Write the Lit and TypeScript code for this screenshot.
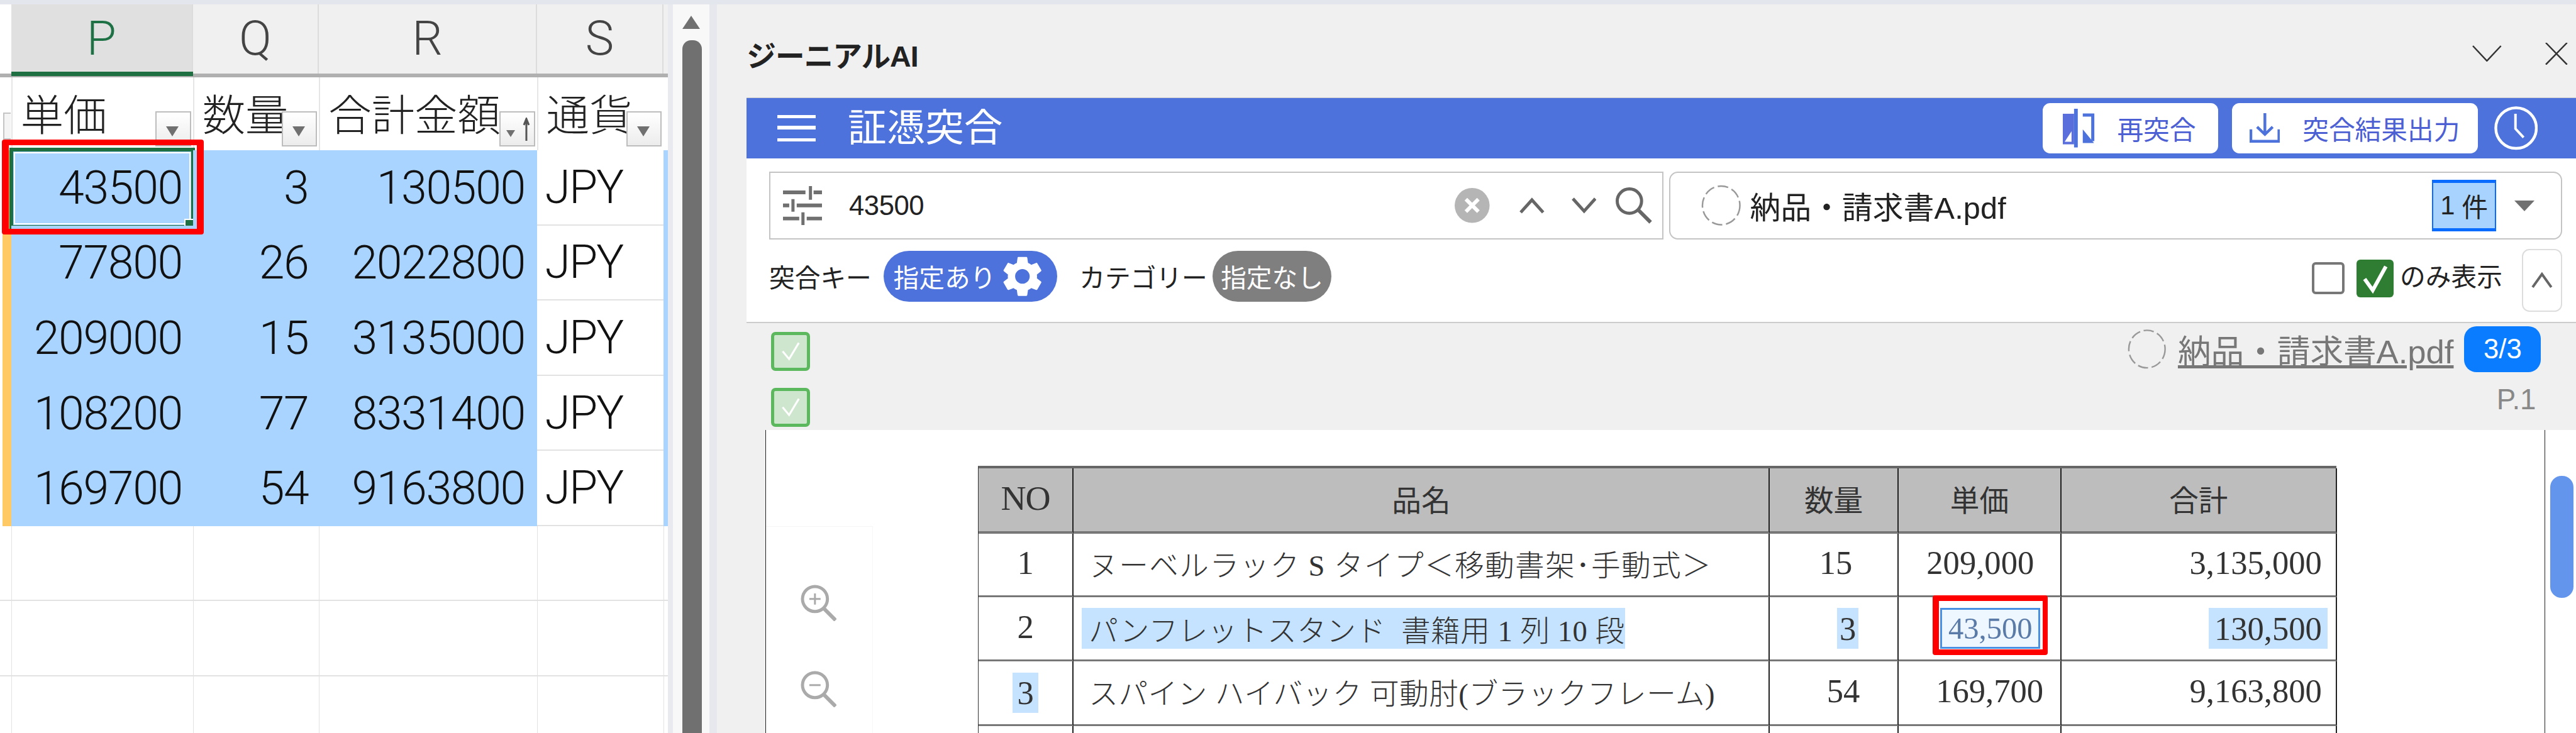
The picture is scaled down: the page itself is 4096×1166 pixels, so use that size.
import { LitElement, html, css, svg } from "lit";
import { customElement } from "lit/decorators.js";

const ROWS = [
  ["43500", "3", "130500"],
  ["77800", "26", "2022800"],
  ["209000", "15", "3135000"],
  ["108200", "77", "8331400"],
  ["169700", "54", "9163800"],
];
const HEADS = ["P", "Q", "R", "S"];
const LABELS = ["単価", "数量", "合計金額", "通貨"];

const GEAR = "M19.14 12.94c.04-.3.06-.61.06-.94 0-.32-.02-.64-.07-.94l2.03-1.58c.18-.14.23-.41.12-.61l-1.92-3.32c-.12-.22-.37-.29-.59-.22l-2.39.96c-.5-.38-1.03-.7-1.62-.94l-.36-2.54c-.04-.24-.24-.41-.48-.41h-3.84c-.24 0-.43.17-.47.41l-.36 2.54c-.59.24-1.13.57-1.62.94l-2.39-.96c-.22-.08-.47 0-.59.22L2.74 8.87c-.12.21-.08.47.12.61l2.03 1.58c-.05.3-.09.63-.09.94s.02.64.07.94l-2.03 1.58c-.18.14-.23.41-.12.61l1.92 3.32c.12.22.37.29.59.22l2.39-.96c.5.38 1.03.7 1.62.94l.36 2.54c.05.24.24.41.48.41h3.84c.24 0 .44-.17.47-.41l.36-2.54c.59-.24 1.13-.56 1.62-.94l2.39.96c.22.08.47 0 .59-.22l1.92-3.32c.12-.22.07-.47-.12-.61l-2.01-1.58zM12 15.6c-1.98 0-3.6-1.62-3.6-3.6s1.62-3.6 3.6-3.6 3.6 1.62 3.6 3.6-1.62 3.6-3.6 3.6z";

const dashed = (cls: string) => html`<svg class=${cls} viewBox="0 0 66 68"><ellipse cx="33" cy="34" rx="30" ry="31" fill="none" stroke="#999" stroke-width="2.5" stroke-dasharray="17 6"/></svg>`;
const magnifier = (plus: boolean) => html`<svg class="mag" viewBox="0 0 58 58"><circle cx="23" cy="23" r="20" fill="none" stroke="#aaa" stroke-width="5"/><path d="M37 38 56 57" stroke="#aaa" stroke-width="6" fill="none"/><path d=${plus ? "M14 23H32M23 14V32" : "M14 23H32"} stroke="#aaa" stroke-width="3" fill="none"/></svg>`;
const check = () => html`<span class="ghost-check"><svg viewBox="0 0 50 50"><path d="M13 25 23 37 38 12" fill="none" stroke="#fff" stroke-width="3"/></svg></span>`;

@customElement("app-root")
export class AppRoot extends LitElement {
  static styles = css`
    :host { display: block; zoom: 0.99273; width: 4126px; height: 1175px; overflow: hidden; background: #fff;
      font-family: "Liberation Sans", "Noto Sans CJK JP", sans-serif; color: #222; }
    * { box-sizing: border-box; }
    svg { display: block; flex: none; }
    .top { height: 7px; background: #e3e6ec; }
    .main { display: flex; height: 1168px; }

    .sheet { width: 1070px; height: 1168px; overflow: hidden; flex: none; display: grid;
      grid-template-columns: 18px 291px 202px 349px 203px 7px; grid-template-rows: 111px 6px 117px repeat(8, 120.4px); align-content: start; background: #fff; }
    .ch { background: #f0f0f0; border-right: 3px solid #dcdcdc; display: flex; align-items: center; justify-content: center;
      font: 300 77px Roboto, sans-serif; color: #444; padding-bottom: 2px; }
    .ch.active { background: #e0e0e0; color: #1e7145; }
    .ch.blank { border-right: 0; background: #f0f0f0; }
    .ch.blank.first { background: #fff; }
    .rule { grid-column: 1 / -1; background: #b0b0b0; position: relative; }
    .rule i { position: absolute; left: 18px; width: 291px; top: -3px; height: 7px; background: #1e6f42; }
    .lab { background: #fff; border-left: 3px solid #e6e6e6; position: relative;
      font: 300 69px/70px "Noto Sans CJK JP", sans-serif; padding: 21px 0 0 13px; white-space: nowrap; color: #222; }
    .lab.side { border-left: 0; padding: 0; }
    .stub { position: absolute; left: 5px; width: 12px; top: 56px; height: 44px; background: #f4f4f4; border: 3px solid #c4c4c4; border-right: 0; }
    .filter { position: absolute; right: 3px; bottom: 6px; width: 57px; height: 57px; background: linear-gradient(#fff, #ececec); border: 3px solid #bdbdbd; }
    .filter::after { content: ""; position: absolute; left: 15px; top: 22px; border: 11px solid transparent; border-top: 17px solid #707070; border-bottom: 0; }
    .filter.sort::after { left: 9px; top: 29px; border-width: 8px; border-top-width: 12px; border-bottom-width: 0; }
    .filter svg { position: absolute; right: 6px; top: 8px; width: 12px; height: 38px; }
    .yellow { background: #ffc966; border-left: 5px solid #fff; }
    .num { background: #a8d4ff; position: relative; display: flex; align-items: center; justify-content: flex-end; padding-right: 17px;
      font: 300 74px Roboto, sans-serif; letter-spacing: -1.4px; color: #111; }
    .num.r { padding-right: 19px; }
    .cur { background: #fff; border-bottom: 3px solid #e2e2e2; display: flex; align-items: center; padding-left: 13px; font: 300 74px Roboto, sans-serif; letter-spacing: -2px; color: #111; }
    .edge { background: #a8d4ff; }
    .e { border-left: 2px solid #e2e2e2; border-bottom: 3px solid #e2e2e2; background: #fff; }
    .e.side { border-left: 0; }
    .cursor { position: absolute; left: -3px; top: -4px; width: 297px; height: 130px; border: 7px solid #1e6f42; outline: 3px solid #fff; outline-offset: -10px; }
    .handle { position: absolute; right: -7px; bottom: -7px; width: 18px; height: 17px; background: #1e6f42; border-left: 3px solid #fff; border-top: 3px solid #fff; }
    .red { position: absolute; border: 10px solid #fe0000; border-radius: 4px; z-index: 3; pointer-events: none; }
    .red.a { left: -15px; top: -17px; width: 323px; height: 152px; border-left-width: 12px; border-right-width: 12px; }
    .red.b { left: 55px; top: -3px; width: 184px; height: 96px; border-left-width: 11px; border-right-width: 9px; }

    .vscroll { width: 78px; flex: none; height: 100%; background: #f8f8f9; border-left: 9px solid #e8eaf0; border-right: 13px solid #e6e8ee; padding-left: 15px; display: flex; flex-direction: column; }
    .up { width: 0; margin-top: 18px; border: 15px solid transparent; border-top: 0; border-bottom: 22px solid #707070; }
    .thumb { margin-top: 18px; flex: 1; width: 31px; background: #707070; border-radius: 14px 14px 0 0; }

    .panel { flex: 1; min-width: 0; background: #f0f0f0; display: flex; flex-direction: column; }
    .tbar { height: 149px; flex: none; padding: 9px 13px 0 48px; display: flex; align-items: center; }
    .tname { font-weight: 700; font-size: 47px; letter-spacing: -1px; }
    .tctl { margin-left: auto; display: flex; align-items: center; gap: 70px; }
    .tctl .v { width: 47px; height: 26px; }
    .tctl .x { width: 36px; height: 35px; }
    .appbar { height: 98px; flex: none; margin-left: 48px; background: #4d72db; border-top: 2px solid #ccc; display: flex; align-items: center; padding: 0 61px 0 49px; color: #fff; }
    .ham { width: 62px; height: 42px; flex: none; border-top: 6px solid #fff; border-bottom: 6px solid #fff; position: relative; margin-right: 51px; }
    .ham::after { content: ""; position: absolute; left: 0; right: 0; top: 12px; height: 6px; background: #fff; }
    .aname { font-size: 62px; line-height: 70px; }
    .abtns { margin-left: auto; display: flex; align-items: center; }
    .abtn { height: 80px; background: #fff; border-radius: 12px; display: flex; align-items: center; color: #4d60d3; font-size: 42px; white-space: nowrap; }
    .abtn.re { width: 281px; padding-left: 31px; gap: 36px; margin-right: 22px; }
    .abtn.out { width: 394px; padding-left: 28px; gap: 36px; margin-right: 26px; }

    .tools { height: 264px; flex: none; margin-left: 48px; background: #fff; border-bottom: 3px solid #ccc; padding: 21px 22px 0 36px; }
    .r1 { display: flex; gap: 9px; height: 109px; }
    .search { width: 1432px; flex: none; border: 3px solid #c4c4c4; display: flex; align-items: center; padding-left: 20px; }
    .q { font-size: 44px; letter-spacing: -.5px; margin-left: 43px; }
    .sicons { margin-left: auto; display: flex; align-items: center; padding-right: 16px; }
    .sp1 { margin-right: 48px; }
    .sp2 { margin-right: 43px; }
    .sp3 { margin-right: 31px; }
    .fsel { flex: 1; border: 3px solid #c4c4c4; border-radius: 14px; display: flex; align-items: center; padding-left: 49px; }
    .dash { width: 66px; height: 68px; }
    .fname { font-size: 49px; margin-left: 13px; letter-spacing: .2px; }
    .count { margin-left: auto; width: 102px; height: 83px; background: #a9d3ff; border: 5px solid #0a6cff; border-width: 6px 3px; font-size: 42px; display: flex; align-items: center; justify-content: center; gap: 11px; }
    .caret { margin: 0 43px 0 29px; width: 0; border: 17px solid transparent; border-top: 18px solid #707070; border-bottom: 0; }
    .r2 { display: flex; align-items: flex-start; margin-top: 15px; height: 101px; font-size: 41px; }
    .lbl { height: 82px; margin-top: 3px; display: flex; align-items: center; white-space: nowrap; }
    .pill { height: 82px; margin-top: 3px; border-radius: 41px; color: #fff; display: flex; align-items: center; white-space: nowrap; }
    .pill.on { width: 278px; background: #4d72db; padding-left: 16px; margin: 3px 36px 0 19px; gap: 8px; }
    .pill.off { width: 191px; background: #7f7f7f; justify-content: center; margin-left: 8px; }
    .gear { width: 78px; height: 78px; margin-left: -4px; }
    .r2 .spacer { flex: 1; }
    .box { width: 52px; height: 51px; margin: 21px 19px 0 0; border: 5px solid #777; border-radius: 6px; background: #fff; }
    .gcheck { width: 60px; height: 61px; margin: 17px 10px 0 0; background: #2e7d32; border-radius: 6px; }
    .only { margin-top: 24px; width: 167px; margin-right: 28px; white-space: nowrap; line-height: 44px; }
    .fold { width: 65px; height: 101px; border: 3px solid #ddd; border-radius: 12px; display: flex; align-items: center; justify-content: center; }

    .results { height: 171px; flex: none; margin-left: 48px; display: flex; flex-direction: column; }
    .rrow { display: flex; padding-left: 39px; }
    .rrow.a { height: 90px; padding-top: 14px; padding-right: 56px; }
    .rrow.b { padding-top: 14px; padding-right: 64px; }
    .ghost-check { width: 62px; height: 62px; border: 6px solid #5cb85c; border-radius: 7px; background: #cde6cd; display: block; }
    .ghost-check svg { width: 100%; height: 100%; }
    .link { margin-left: auto; margin-top: -9px; display: flex; align-items: center; height: 73px; }
    .ldash { width: 64px; height: 69px; }
    .ltext { font-size: 53px; color: #777; text-decoration: underline; margin: 0 17px 0 18px; white-space: nowrap; }
    .badge { width: 123px; height: 73px; background: #0a7cff; border-radius: 20px; color: #fff; font-size: 44px; display: flex; align-items: center; justify-content: center; }
    .page { margin-left: auto; margin-top: -4px; font-size: 46px; color: #888; line-height: 46px; }

    .docwrap { flex: 1; min-height: 0; margin-left: 78px; display: flex; }
    .doc { width: 2851px; flex: none; height: 100%; overflow: hidden; position: relative; background: #fff; border-left: 2px solid #222; border-right: 2px solid #222; padding: 57px 0 0 339px; }
    .zoomtools { position: absolute; left: 0; top: 154px; width: 171px; height: 400px; border-top: 2px solid #f6f6f6; border-right: 2px solid #f6f6f6; padding: 93px 0 0 55px; display: flex; flex-direction: column; gap: 80px; }
    .mag { width: 58px; height: 58px; }
    .dscroll { flex: 1; background: #fff; padding: 74px 4px 0 8px; }
    .dthumb { height: 195px; background: #6495ed; border-radius: 18px; }
    .table { display: grid; width: 2176px; grid-template-columns: 153px 1115px 206px 261px 441px; grid-template-rows: 105px 102px 103px 103px 103px;
      font: 48px "Liberation Serif", "Noto Sans CJK JP", serif; color: #333; border-top: 5px solid #666; border-left: 2px solid #333; }
    .c { border-right: 3px solid #222; border-bottom: 4px solid #777; display: flex; align-items: center; position: relative; white-space: pre; padding-bottom: 5px; }
    .c.bare { padding-bottom: 0; }
    .hd { background: #bdbdbd; justify-content: center; font-size: 47px; border-bottom-width: 5px; }
    .hd.no { font-size: 56px; letter-spacing: -1px; }
    .ctr { justify-content: center; font-size: 53px; }
    .nm { padding-left: 24px; font-size: 47px; font-weight: 300; }
    .nm .t1 { letter-spacing: 1.4px; }
    .nm .t3 { letter-spacing: .5px; }
    .qty { font-size: 53px; justify-content: flex-end; padding-right: 72px; }
    .qty.q2 { padding-right: 62px; }
    .qty.q3 { padding-right: 60px; }
    .pr { font-size: 53px; justify-content: flex-end; padding-right: 27px; }
    .pr.p1 { padding-right: 42px; }
    .tt { font-size: 53px; justify-content: flex-end; padding-right: 22px; }
    .hl { background: #c5e3ff; height: 65px; display: flex; align-items: center; }
    .hl.name { width: 870px; padding-left: 11px; margin-left: -11px; letter-spacing: .5px; }
    .hl.tot { padding: 0 9px 0 9px; margin-right: -9px; }
    .hl.q3h { padding: 0 4px; }
    .hl.no3 { padding: 0 7px; }
    .focus { height: 65px; width: 160px; margin-right: 5px; background: #eef6ff; border: 4px solid #4a90e2; color: #5a7aa8; display: flex; align-items: center; justify-content: center; font-size: 49px; }
  `;

  private sheet() {
    return html`<div class="sheet">
      <div class="ch blank first"></div>
      ${HEADS.map((h, i) => html`<div class="ch ${i === 0 ? "active" : ""}">${h}</div>`)}
      <div class="ch blank"></div>
      <div class="rule"><i></i></div>
      <div class="lab side"><span class="stub"></span></div>
      ${LABELS.map((l, i) => html`<div class="lab">${l}<span class="filter ${i === 2 ? "sort" : ""}">${i === 2 ? svg`<svg viewBox="0 0 12 38"><path d="M6 38V6M2 12 6 2 10 12" fill="none" stroke="#555" stroke-width="3"/></svg>` : ""}</span></div>`)}
      <div class="lab side"></div>
      ${ROWS.map((r, i) => html`
        <div class="yellow"></div>
        <div class="num">${r[0]}${i === 0 ? html`<span class="cursor"><span class="handle"></span></span><span class="red a"></span>` : ""}</div>
        <div class="num">${r[1]}</div>
        <div class="num r">${r[2]}</div>
        <div class="cur">JPY</div>
        <div class="edge"></div>`)}
      ${[0, 1, 2].map(() => html`<div class="e side"></div><div class="e"></div><div class="e"></div><div class="e"></div><div class="e"></div><div class="e"></div>`)}
    </div>`;
  }

  private toolbar() {
    return html`<div class="tools">
      <div class="r1">
        <div class="search">
          <svg width="63" height="63" viewBox="0 0 63 63" fill="none" stroke="#707070" stroke-width="6"><path d="M0 10H36M49 10H63M0 31H10M22 31H63M0 52H26M38 52H63"/><path d="M44 0V22M16 21V41M32 42V63" stroke-width="5"/></svg>
          <span class="q">43500</span>
          <div class="sicons">
            <svg class="sp1" width="56" height="56" viewBox="0 0 56 56"><circle cx="28" cy="28" r="28" fill="#b5b5b5"/><path d="M18 18 38 38M38 18 18 38" stroke="#fff" stroke-width="6"/></svg>
            <svg class="sp2" width="40" height="26" viewBox="0 0 40 26"><path d="M2 24 20 4 38 24" fill="none" stroke="#666" stroke-width="5"/></svg>
            <svg class="sp3" width="40" height="26" viewBox="0 0 40 26"><path d="M2 2 20 22 38 2" fill="none" stroke="#666" stroke-width="5"/></svg>
            <svg width="58" height="58" viewBox="0 0 58 58" fill="none" stroke="#666" stroke-width="5"><circle cx="22" cy="22" r="19.5"/><path d="M36 36 56 56" stroke-width="6"/></svg>
          </div>
        </div>
        <div class="fsel">
          ${dashed("dash")}
          <span class="fname">納品・請求書A.pdf</span>
          <span class="count"><span>1</span><span>件</span></span>
          <span class="caret"></span>
        </div>
      </div>
      <div class="r2">
        <span class="lbl">突合キー</span>
        <span class="pill on">指定あり<svg class="gear" viewBox="0 0 24 24"><path fill="#fff" d=${GEAR}/></svg></span>
        <span class="lbl">カテゴリー</span>
        <span class="pill off">指定なし</span>
        <span class="spacer"></span>
        <span class="box"></span>
        <span class="gcheck"><svg width="60" height="61" viewBox="0 0 60 61"><path d="M13 31 26 49 47 11" fill="none" stroke="#fff" stroke-width="6"/></svg></span>
        <span class="only">のみ表示</span>
        <span class="fold"><svg width="34" height="26" viewBox="0 0 34 26"><path d="M2 24 17 3 32 24" fill="none" stroke="#666" stroke-width="4"/></svg></span>
      </div>
    </div>`;
  }

  private table() {
    return html`<div class="table">
      <div class="c hd no">NO</div><div class="c hd">品名</div><div class="c hd">数量</div><div class="c hd">単価</div><div class="c hd">合計</div>

      <div class="c ctr">1</div>
      <div class="c nm"><span class="t1">ヌーベルラック S タイプ＜移動書架･手動式＞</span></div>
      <div class="c qty">15</div><div class="c pr p1">209,000</div><div class="c tt">3,135,000</div>

      <div class="c ctr">2</div>
      <div class="c nm bare"><span class="hl name">パンフレットスタンド  書籍用 1 列 10 段</span></div>
      <div class="c qty q2 bare"><span class="hl q3h">3</span></div>
      <div class="c pr bare"><span class="focus">43,500</span><span class="red b"></span></div>
      <div class="c tt bare"><span class="hl tot">130,500</span></div>

      <div class="c ctr bare"><span class="hl no3">3</span></div>
      <div class="c nm"><span class="t3">スパイン ハイバック 可動肘(ブラックフレーム)</span></div>
      <div class="c qty q3">54</div><div class="c pr">169,700</div><div class="c tt">9,163,800</div>

      <div class="c"></div><div class="c"></div><div class="c"></div><div class="c"></div><div class="c"></div>
    </div>`;
  }

  render() {
    return html`
      <div class="top"></div>
      <div class="main">
        ${this.sheet()}
        <div class="vscroll"><div class="up"></div><div class="thumb"></div></div>
        <div class="panel">
          <div class="tbar">
            <span class="tname">ジーニアルAI</span>
            <div class="tctl">
              <svg class="v" viewBox="0 0 47 26"><path d="M1 1 23.5 25 46 1" fill="none" stroke="#333" stroke-width="2.5"/></svg>
              <svg class="x" viewBox="0 0 36 35"><path d="M1 0 35 35M35 0 1 35" fill="none" stroke="#333" stroke-width="2.5"/></svg>
            </div>
          </div>
          <div class="appbar">
            <span class="ham"></span>
            <span class="aname">証憑突合</span>
            <div class="abtns">
              <span class="abtn re">
                <svg width="52" height="62" viewBox="0 0 52 62"><path d="M1 8H19V57H1Z" fill="#5b6fdc"/><path d="M15 36V53H4Z" fill="#fff"/><path d="M22 0V62" stroke="#4d72db" stroke-width="6"/><path d="M33 10H49V52" fill="none" stroke="#4d72db" stroke-width="5"/><path d="M33 33 51 55H33Z" fill="#4d72db"/></svg>
                再突合
              </span>
              <span class="abtn out">
                <svg width="49" height="48" viewBox="0 0 49 48" fill="none" stroke="#4d72db" stroke-width="4.5"><path d="M2 26V45H47V26" /><path d="M24.5 0V34M12 22 24.5 34 37 22"/></svg>
                突合結果出力
              </span>
              <svg width="70" height="70" viewBox="0 0 70 70" fill="none" stroke="#fff"><circle cx="35" cy="35" r="32.5" stroke-width="4.5"/><path d="M34 12V36L47 50" stroke-width="4"/></svg>
            </div>
          </div>
          ${this.toolbar()}
          <div class="results">
            <div class="rrow a">
              ${check()}
              <div class="link">${dashed("ldash")}<span class="ltext">納品・請求書A.pdf</span><span class="badge">3/3</span></div>
            </div>
            <div class="rrow b">
              ${check()}
              <span class="page">P.1</span>
            </div>
          </div>
          <div class="docwrap">
            <div class="doc">
              <div class="zoomtools">${magnifier(true)}${magnifier(false)}</div>
              ${this.table()}
            </div>
            <div class="dscroll"><div class="dthumb"></div></div>
          </div>
        </div>
      </div>`;
  }
}
